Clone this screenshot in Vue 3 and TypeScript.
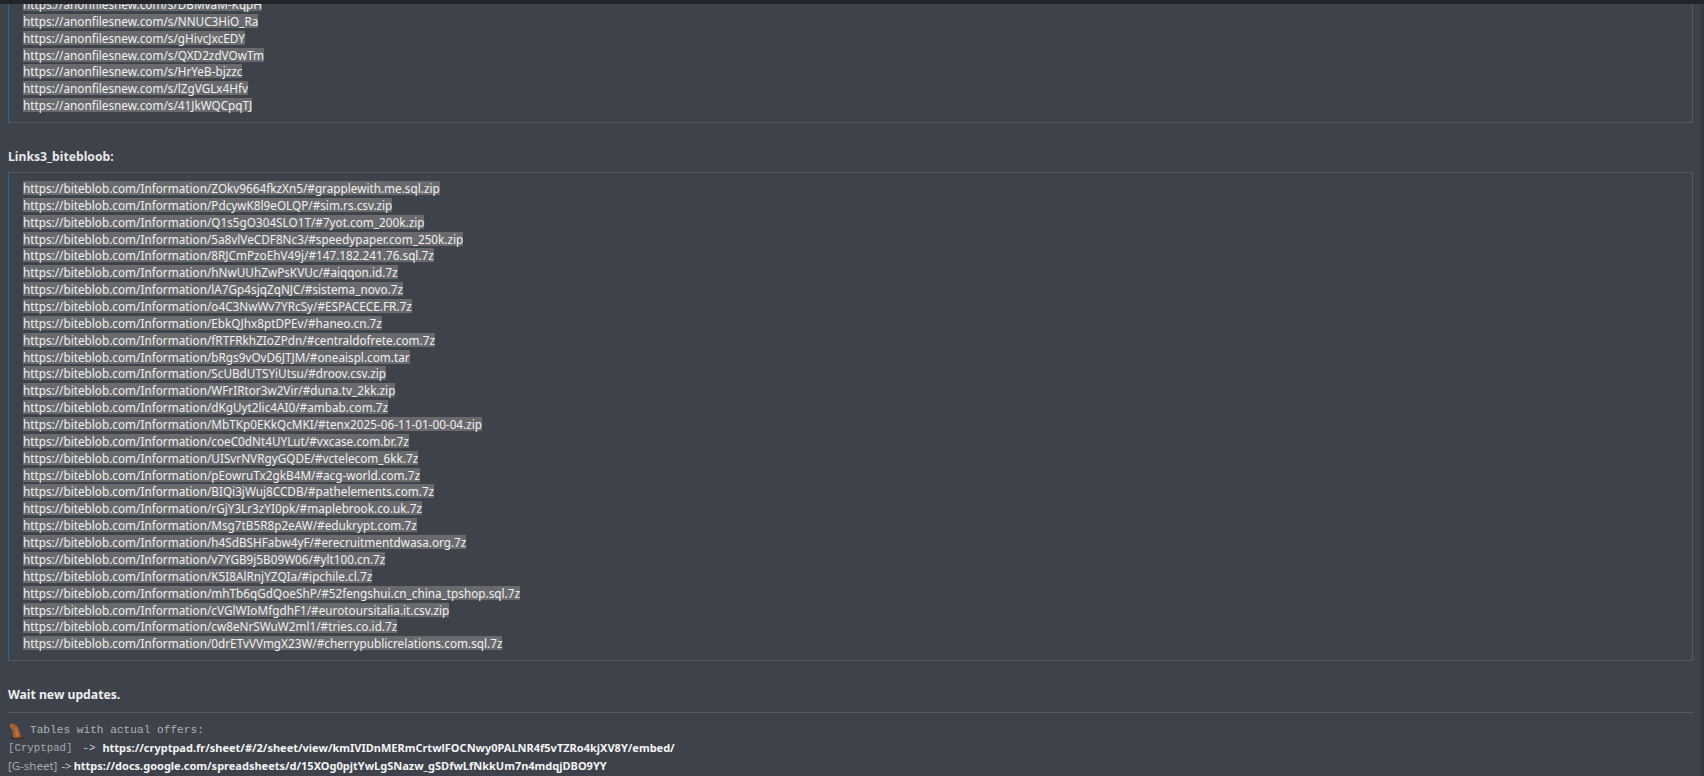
<script setup lang="ts">
const topLinks: string[] = ['DBMvaM-KqpH','NNUC3HiO_Ra','gHivcJxcEDY','QXD2zdVOwTm','HrYeB-bjzzc','lZgVGLx4Hfv','41JkWQCpqTJ'].map((s) => 'https://anonfilesnew.com/s/' + s)
const blobLinks: string[] = [
  'ZOkv9664fkzXn5/#grapplewith.me.sql.zip','PdcywK8l9eOLQP/#sim.rs.csv.zip','Q1s5gO304SLO1T/#7yot.com_200k.zip','5a8vlVeCDF8Nc3/#speedypaper.com_250k.zip','8RJCmPzoEhV49j/#147.182.241.76.sql.7z','hNwUUhZwPsKVUc/#aiqqon.id.7z','lA7Gp4sjqZqNJC/#sistema_novo.7z','o4C3NwWv7YRcSy/#ESPACECE.FR.7z','EbkQJhx8ptDPEv/#haneo.cn.7z','fRTFRkhZIoZPdn/#centraldofrete.com.7z','bRgs9vOvD6JTJM/#oneaispl.com.tar','ScUBdUTSYiUtsu/#droov.csv.zip','WFrIRtor3w2Vir/#duna.tv_2kk.zip','dKgUyt2lic4AI0/#ambab.com.7z','MbTKp0EKkQcMKI/#tenx2025-06-11-01-00-04.zip','coeC0dNt4UYLut/#vxcase.com.br.7z','UISvrNVRgyGQDE/#vctelecom_6kk.7z','pEowruTx2gkB4M/#acg-world.com.7z','BIQi3jWuj8CCDB/#pathelements.com.7z','rGjY3Lr3zYI0pk/#maplebrook.co.uk.7z','Msg7tB5R8p2eAW/#edukrypt.com.7z','h4SdBSHFabw4yF/#erecruitmentdwasa.org.7z','v7YGB9j5B09W06/#ylt100.cn.7z','K5I8AlRnjYZQIa/#ipchile.cl.7z','mhTb6qGdQoeShP/#52fengshui.cn_china_tpshop.sql.7z','cVGlWIoMfgdhF1/#eurotoursitalia.it.csv.zip','cw8eNrSWuW2ml1/#tries.co.id.7z','0drETvVVmgX23W/#cherrypublicrelations.com.sql.7z',
].map((s) => 'https://biteblob.com/Information/' + s)
</script>

<template>
  <div class="page">
    <div class="topbar"></div>
    <main class="post">
      <div class="box first">
        <div v-for="l in topLinks" :key="l" class="line"><span class="sel">{{ l }}</span></div>
      </div>
      <h4 class="title">Links3_bitebloob:</h4>
      <div class="box">
        <div v-for="l in blobLinks" :key="l" class="line"><span class="sel">{{ l }}</span></div>
      </div>
      <p class="wait">Wait new updates.</p>
      <div class="sig">
        <div class="row mono tables">
          <svg class="cat" width="16" height="18" viewBox="0 0 16 18">
            <ellipse cx="9" cy="15.800" rx="6.500" ry="1.400" fill="#3a2f28" />
            <path d="M1.500 3.500C2 1.500 4.500 1 6 2.200c2.800 1.200 4.800 4 5.500 7 .4 2 .9 4 2 5.800-2 1-6.500 1.200-8.500.3C4.800 12.500 5 9.500 4.200 7.200 3 6.800 1.200 5.500 1.500 3.500z" fill="#a5602f" />
            <path d="M7 5.500c2 1.500 3 4 3.200 6.800.1 1.300-1 2.200-2.400 1.800C7.800 11 7.800 8 7 5.500z" fill="#bd7340" />
          </svg>
          <span>Tables with actual offers:</span>
        </div>
        <div class="row"><span class="mono tag">[Cryptpad]</span><span class="mono arrow a1">-&gt;</span><b>https://cryptpad.fr/sheet/#/2/sheet/view/kmIVIDnMERmCrtwlFOCNwy0PALNR4f5vTZRo4kjXV8Y/embed/</b></div>
        <div class="row"><span class="tag sans">[G-sheet]</span><span class="arrow a2">-&gt;</span><b>https://docs.google.com/spreadsheets/d/15XOg0pjtYwLgSNazw_gSDfwLfNkkUm7n4mdqjDBO9YY</b></div>
      </div>
    </main>
    <div class="scroll"></div>
  </div>
</template>

<style>
html, body { margin: 0; background: #3e424b; overflow: hidden; }
</style>

<style scoped>
.page { position: relative; width: 1704px; height: 776px; overflow: hidden; background: #3e424b; color: #e3e3e3; font-family: "Noto Sans", sans-serif; font-size: 11.75px; line-height: 16.9px; }
.topbar { position: absolute; top: 0; left: 0; right: 0; height: 4px; background: #22262b; z-index: 2; }
.scroll { position: absolute; top: 4px; right: 0; bottom: 0; width: 3px; background: #353a42; }
.post { padding: 0 11px 0 8px; margin-top: -4px; }
.box { border: 1px solid #555961; border-left-color: #1f6aa0; padding: 7px 14px 8px; }
.first { border-top: none; padding-top: 0; }
.line { height: 16.87px; white-space: nowrap; }
.sel { display: inline-block; height: 14px; line-height: 14px; background: #696a6d; color: #f0f0f0; }
.title { margin: 25px 0 7px; font-size: 12.2px; line-height: 17px; font-weight: 700; color: #e8e8e8; }
.wait { margin: 26px 0 8px; font-weight: 700; font-size: 12.2px; color: #eeeeee; }
.sig { border-top: 1px solid #555961; padding-top: 9px; }
.row { height: 17.6px; white-space: nowrap; display: flex; align-items: center; color: #9a9da3; }
.mono { font-family: "Liberation Mono", monospace; color: #b0b2b6; }
.tables { font-size: 11.15px; }
.tables span { margin-left: 6px; }
.row b { color: #f4f4f4; font-weight: 700; font-size: 11px; }
.tag { color: #a7a9ad; font-size: 10.75px; }
.sans { font-size: 11.5px; }
.arrow { color: #cfd0d2; font-size: 10.75px; }
.a1 { margin: 0 7px 0 10px; }
.a2 { margin: 0 2px 0 4px; font-size: 11.5px; }
.cat { flex: none; }
</style>
